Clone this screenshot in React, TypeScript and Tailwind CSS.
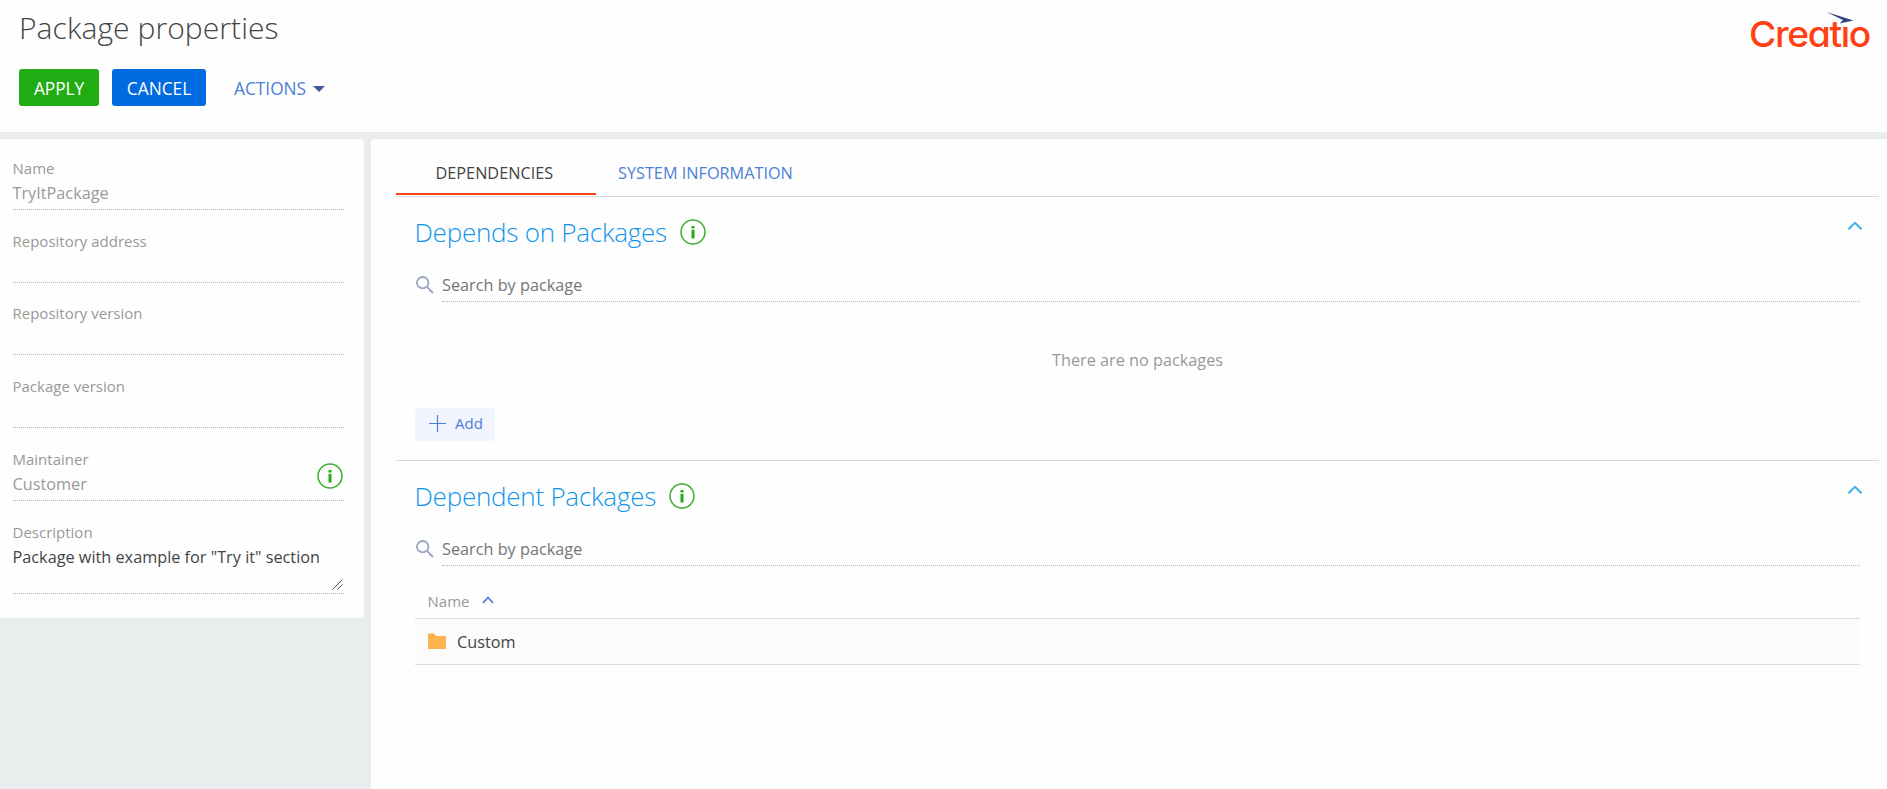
import React from "react";

function InfoIcon() {
  return (
    <svg width="26" height="26" viewBox="0 0 26 26" className="shrink-0">
      <circle cx="13" cy="13" r="12" fill="none" stroke="#3faa33" strokeWidth="1.5" />
      <rect x="11.5" y="7" width="3" height="2.5" fill="#22ac14" />
      <rect x="11.5" y="10.8" width="3" height="8.7" fill="#22ac14" />
    </svg>
  );
}

function SearchIcon() {
  return (
    <svg width="18" height="18" viewBox="0 0 18 18" className="shrink-0" fill="none" stroke="#9aa5c4">
      <circle cx="6.7" cy="6.7" r="5.7" strokeWidth="1.8" />
      <path d="M10.9 10.9L17 17" strokeWidth="2" />
    </svg>
  );
}

function Logo() {
  return (
    <svg width="126" height="56" viewBox="0 0 126 56" className="shrink-0">
      <text
        x="-1"
        y="41.5"
        textLength="121"
        lengthAdjust="spacingAndGlyphs"
        fill="#ff4013"
        className="font-['Inter',sans-serif] text-[36px] font-medium tracking-[-1.3px] [font-feature-settings:'cv11']"
      >
        Creatio
      </text>
      <rect x="90" y="10" width="12" height="10.5" fill="#fefefe" />
      <path d="M76.500 7L103.500 15.500L89.500 18.500L93 15Z" fill="#33427e" />
    </svg>
  );
}

function Field({ label, value = "" }: { label: string; value?: string }) {
  return (
    <div className="flex h-[52px] flex-col border-b border-dotted border-[#b5b5b5] -indent-[0.5px]">
      <div className="h-[23px] text-[15px] leading-5 text-[#999]">{label}</div>
      <div className="text-[16.25px] leading-6 text-[#999]">{value}</div>
    </div>
  );
}

function SectionHeader({ title }: { title: string }) {
  return (
    <div className="flex h-10 items-center">
      <h2 className="text-[26px] font-light leading-[38px] tracking-[-0.24px] text-[#1095ea] -indent-[0.5px]">{title}</h2>
      <div className="ml-[13px] flex">
        <InfoIcon />
      </div>
      <svg width="16" height="10" viewBox="0 0 16 10" className="-mt-3 mr-[-3px] ml-auto">
        <path d="M1.5 8.2L8 1.8L14.500 8.200" fill="none" stroke="#43aef0" strokeWidth="2" />
      </svg>
    </div>
  );
}

function SearchBox() {
  return (
    <div className="flex h-[34px]">
      <div className="w-[27px] pt-[8px] pl-px">
        <SearchIcon />
      </div>
      <div className="h-[34px] flex-1 border-b border-dotted border-[#b5b5b5] text-[16.25px] leading-[34px] text-[#757575]">
        Search by package
      </div>
    </div>
  );
}

export default function App() {
  return (
    <div className="flex h-[789px] w-full flex-col overflow-hidden bg-[#e9edee] font-['Open_Sans',sans-serif]">
      <header className="flex h-[132px] shrink-0 justify-between bg-[#fefefe] pr-[11px] pl-[19px]">
        <div>
          <h1 className="mt-[7px] h-[42px] text-[30px] font-light leading-[42px] tracking-[0.07px] text-[#444]">
            Package properties
          </h1>
          <div className="mt-5 flex h-[37px] items-center text-[17.3px]">
            <button className="h-[37px] w-20 rounded-[3px] bg-[#22ac14] pt-0.5 tracking-[-0.1px] text-white">APPLY</button>
            <button className="ml-[13px] h-[37px] w-[94px] rounded-[3px] bg-[#006be1] pt-0.5 text-white">CANCEL</button>
            <button className="ml-7 flex items-center pt-0.5 text-[#4c7fd6]">
              ACTIONS
              <svg width="12" height="6" viewBox="0 0 12 6" className="ml-[7px]">
                <path d="M0 0H12L6 6Z" fill="#44599a" />
              </svg>
            </button>
          </div>
        </div>
        <div className="pt-[5px]">
          <Logo />
        </div>
      </header>

      <div className="flex flex-1 items-start gap-[7px] pt-[7px]">
        <aside className="flex h-[479px] w-[364px] shrink-0 flex-col rounded-r-[4px] bg-[#fefefe] pt-[19px] pr-5 pl-[13px]">
          <div className="flex flex-col gap-[21px]">
            <Field label="Name" value="TryItPackage" />
            <Field label="Repository address" />
          </div>
          <div className="mt-5 flex flex-col gap-[21px]">
            <div className="pb-px">
              <Field label="Repository version" />
            </div>
            <div className="-mt-px">
              <Field label="Package version" />
            </div>
            <div className="relative">
              <Field label="Maintainer" value="Customer" />
              <div className="absolute top-[14px] right-px">
                <InfoIcon />
              </div>
            </div>
            <div className="relative h-[72px] border-b border-dotted border-[#b5b5b5] -indent-[0.5px]">
              <div className="h-[23px] text-[15px] leading-5 text-[#999]">Description</div>
              <div className="text-[16.25px] leading-6 whitespace-nowrap text-[#444]">
                Package with example for "Try it" section
              </div>
              <svg width="11" height="11" viewBox="0 0 11 11" className="absolute right-px bottom-[3px]">
                <path d="M0.500 10.500L10.500 0.500M5.500 10.500L10.500 5.500" stroke="#555" strokeWidth="1" />
              </svg>
            </div>
          </div>
        </aside>

        <main className="h-[650px] flex-1 rounded-tl-[4px] bg-[#fefefe] pr-2 pl-[25px]">
          <nav className="flex h-[58px] border-b border-[#d9d9d9] pt-[14px] text-[16.25px] leading-10">
            <div className="h-[42px] w-[200px] border-b-2 border-[#fb4318] pl-[39.5px] text-[#444]">DEPENDENCIES</div>
            <div className="pl-[22px] text-[#4c7fd6]">SYSTEM INFORMATION</div>
          </nav>

          <section className="h-[264px] border-b border-[#d9d9d9] pt-[15px] pr-[19px] pl-[19px]">
            <SectionHeader title="Depends on Packages" />
            <div className="mt-[16px]">
              <SearchBox />
            </div>
            <div className="mt-[46px] text-center text-[16.25px] leading-6 text-[#999]">There are no packages</div>
            <button className="mt-9 flex h-[33px] w-20 items-center rounded-[3px] bg-[#f2f5ff] pb-0.5 pl-[14px] text-[15px] text-[#4c7fd6]">
              <svg width="17" height="17" viewBox="0 0 17 17" className="mr-[9px]">
                <path d="M8.500 0V17M0 8.500H17" stroke="#4c7fd6" strokeWidth="1.200" />
              </svg>
              Add
            </button>
          </section>

          <section className="pt-[15px] pr-[19px] pl-[19px]">
            <SectionHeader title="Dependent Packages" />
            <div className="mt-[16px]">
              <SearchBox />
            </div>
            <div className="mt-[25px] flex h-[28px] items-start border-b border-[#dcdcdc] pl-[12.5px] text-[15px] leading-5 text-[#999]">
              Name
              <svg width="12" height="8" viewBox="0 0 12 8" className="mt-[5px] ml-[13px]">
                <path d="M1 6.800L6 1.500L11 6.800" fill="none" stroke="#4c7fd6" strokeWidth="1.800" />
              </svg>
            </div>
            <div className="flex h-[46px] items-center border-b border-[#dcdcdc] bg-[#fbfbfb] pl-[13px] text-[16.25px] text-[#444]">
              <svg width="18" height="16" viewBox="0 0 18 16" className="-mt-[2px] mr-[11px]">
                <path d="M0 .5H6L8 3H18V16H0Z" fill="#fdb44e" />
              </svg>
              <span className="pt-0.5">Custom</span>
            </div>
          </section>
        </main>
      </div>
    </div>
  );
}
